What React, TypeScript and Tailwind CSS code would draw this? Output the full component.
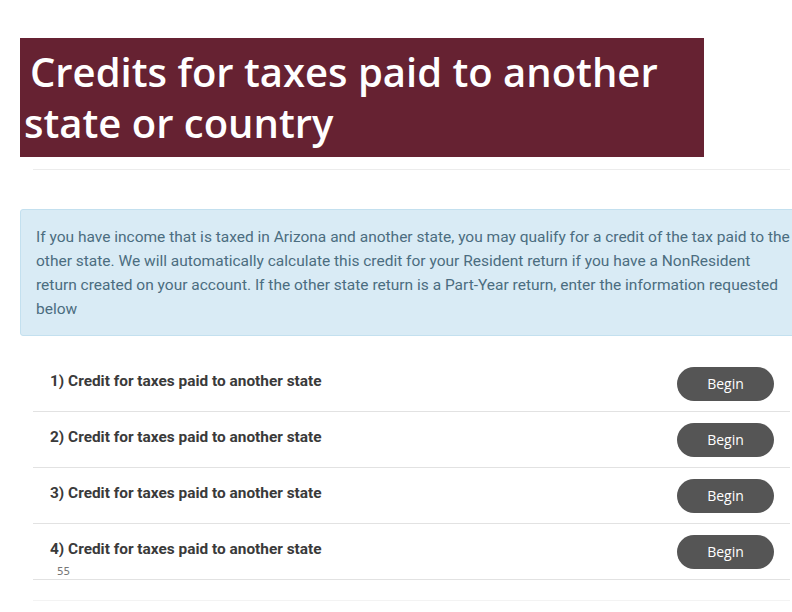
import React from 'react';

const rows = [1, 2, 3, 4];

const App = () => {
  return (
    <div className="w-[792px] h-[612px] bg-white overflow-hidden relative" style={{ fontFamily: 'Roboto, sans-serif' }}>
      {/* Title banner */}
      <div className="pt-[38px] pl-5">
        <div className="w-[684px] h-[119px] bg-[#662232] text-white pl-1 pt-[8px]">
          <h1 className="text-[40px] leading-[51px] font-semibold" style={{ fontFamily: '"Open Sans", sans-serif' }}>
            <span className="block pl-[6px]">Credits for taxes paid to another</span>
            <span className="block">state or country</span>
          </h1>
        </div>
      </div>

      <div className="ml-[33px] mr-[2px] mt-3 border-t border-[#ececec]" />

      {/* Info alert */}
      <div className="ml-5 mt-[39px] w-[800px] h-[127px] bg-[#d9ebf5] border border-[#c3e0ef] rounded-l-[3px] pl-[15px] pt-[15px]">
        <p className="w-[755px] text-[15.5px] leading-6 text-[#4b6d80]">
          If you have income that is taxed in Arizona and another state, you may qualify for a credit of the tax paid to the other state. We will automatically calculate this credit for your Resident return if you have a NonResident return created on your account. If the other state return is a Part-Year return, enter the information requested below
        </p>
      </div>

      {/* Credit rows */}
      <div className="ml-[33px] mr-[2px] mt-[20px]">
        {rows.map((n) => (
          <div key={n} className="h-14 flex items-center justify-between border-b border-[#e2e2e2] relative">
            <span className="pl-[17px] pb-[3px] text-[15.4px] font-bold text-[#3a3a3a]">
              {n}) Credit for taxes paid to another state
            </span>
            <button className="mr-[16px] w-[97px] h-[34px] rounded-full bg-[#555555] text-white text-[14px]" style={{ fontFamily: '"Open Sans", sans-serif' }}>
              Begin
            </button>
            {n === 4 && (
              <span className="absolute left-[24px] top-[42px] text-[11px] leading-none text-[#777]" style={{ fontFamily: '"DejaVu Sans Mono", monospace' }}>
                55
              </span>
            )}
          </div>
        ))}
        <div className="mt-[20px] border-t border-[#f3f3f3]" />
      </div>
    </div>
  );
};

export default App;
